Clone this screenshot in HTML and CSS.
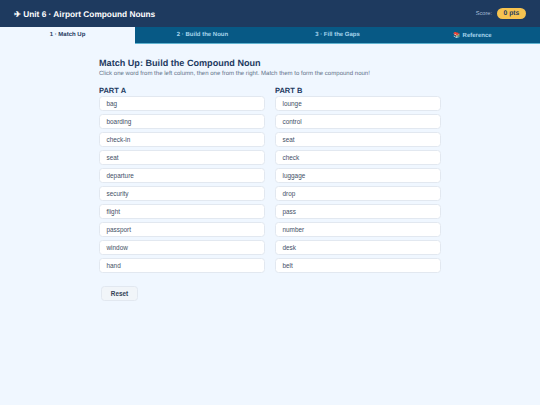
FILE: index.html
```html
<!DOCTYPE html>
<html lang="en">
<head>
    <meta charset="UTF-8">
    <meta name="viewport" content="width=device-width, initial-scale=1.0">
    <title>Unit 6 · Airport Compound Nouns</title>
    <link rel="stylesheet" href="styles.css">
</head>
<body>
    <div class="header">
        <h1>✈ Unit 6 · Airport Compound Nouns</h1>
        <div class="score">
            <span class="score-label">Score:</span>
            <span class="score-pill">0 pts</span>
        </div>
    </div>

    <div class="tabs">
        <div class="tab active">1 · Match Up</div>
        <div class="tab">2 · Build the Noun</div>
        <div class="tab">3 · Fill the Gaps</div>
        <div class="tab">📚 Reference</div>
    </div>

    <div class="content">
        <h2>Match Up: Build the Compound Noun</h2>
        <p class="intro">Click one word from the left column, then one from the right. Match them to form the compound noun!</p>

        <div class="columns">
            <div class="column">
                <h3>PART A</h3>
                <button class="word">bag</button>
                <button class="word">boarding</button>
                <button class="word">check-in</button>
                <button class="word">seat</button>
                <button class="word">departure</button>
                <button class="word">security</button>
                <button class="word">flight</button>
                <button class="word">passport</button>
                <button class="word">window</button>
                <button class="word">hand</button>
            </div>
            <div class="column">
                <h3>PART B</h3>
                <button class="word">lounge</button>
                <button class="word">control</button>
                <button class="word">seat</button>
                <button class="word">check</button>
                <button class="word">luggage</button>
                <button class="word">drop</button>
                <button class="word">pass</button>
                <button class="word">number</button>
                <button class="word">desk</button>
                <button class="word">belt</button>
            </div>
        </div>

        <button class="btn-reset">Reset</button>
    </div>
</body>
</html>
```

FILE: styles.css
```css
* {
    margin: 0;
    padding: 0;
    box-sizing: border-box;
}

body {
    font-family: "Liberation Sans", Arial, "Noto Sans CJK SC", sans-serif;
    text-rendering: geometricPrecision;
    background: #f0f7ff;
    min-height: 100vh;
}

.header {
    height: 27px;
    background: #1e3a5f;
    color: white;
    display: flex;
    align-items: center;
    justify-content: space-between;
    padding: 0 14px;
}

.header h1 {
    font-size: 8.3px;
    font-weight: 700;
}

.score {
    display: flex;
    align-items: center;
    gap: 5px;
}

.score-label {
    font-size: 5.6px;
    color: #a9bdd6;
}

.score-pill {
    background: #f6c350;
    color: #1e3a5f;
    font-size: 6.75px;
    font-weight: 700;
    height: 11px;
    line-height: 11px;
    width: 29px;
    text-align: center;
    border-radius: 6px;
}

.tabs {
    display: flex;
    height: 17px;
    background: #075985;
}

.tab {
    flex: 1;
    display: flex;
    align-items: center;
    justify-content: center;
    font-size: 6px;
    font-weight: 700;
    color: #a5d4ec;
    border-bottom: 1px solid #5fb3d0;
}

.tab.active {
    background: #f0f7ff;
    color: #1e3a5f;
    border-bottom-color: #f0f7ff;
}

.content {
    width: 342px;
    margin: 0 auto;
    padding-top: 13px;
}

.content h2 {
    font-size: 9.1px;
    line-height: 12px;
    font-weight: 700;
    color: #1e3a5f;
}

.intro {
    font-size: 6.05px;
    line-height: 8px;
    margin-top: 1px;
    color: #64748b;
}

.columns {
    display: grid;
    grid-template-columns: 1fr 1fr;
    gap: 10px;
    margin-top: 8px;
}

.column h3 {
    font-size: 7.5px;
    line-height: 9px;
    font-weight: 700;
    color: #1e3a5f;
    margin-bottom: 1px;
}

.word {
    display: block;
    width: 100%;
    height: 15px;
    margin-bottom: 3px;
    padding: 0 6.5px;
    text-align: left;
    font-family: inherit;
    font-size: 6.4px;
    color: #3f4f66;
    background: white;
    border: 1px solid #e2e8f0;
    border-radius: 3.5px;
}

.btn-reset {
    display: block;
    width: 37px;
    height: 15px;
    margin: 10px 0 0 2px;
    font-family: inherit;
    font-size: 6.4px;
    font-weight: 700;
    color: #334155;
    background: #f1f5f9;
    border: 1px solid #e2e8f0;
    border-radius: 3.5px;
}
```
